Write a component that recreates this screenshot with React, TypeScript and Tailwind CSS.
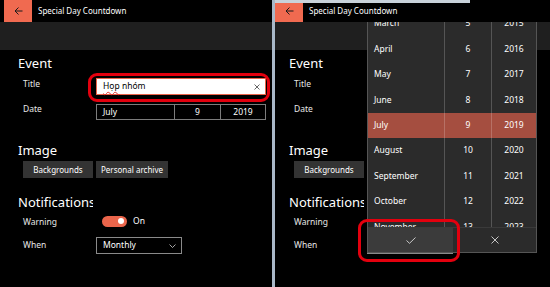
import React from "react";

const months = [
  ["March", "5", "2015"],
  ["April", "6", "2016"],
  ["May", "7", "2017"],
  ["June", "8", "2018"],
  ["July", "9", "2019"],
  ["August", "10", "2020"],
  ["September", "11", "2021"],
  ["October", "12", "2022"],
  ["November", "13", "2023"],
];

function Label({ children }: { children: React.ReactNode }) {
  return <div className="text-[8.5px] leading-[11px] text-[#e8e8e8]">{children}</div>;
}

function Screen({ picker = false }: { picker?: boolean }) {
  return (
    <div className="relative h-full bg-black text-white flex flex-col">
      {/* title bar */}
      <div className="h-[22px] flex items-center shrink-0">
        <div className="ml-[4px] w-[28px] h-full bg-[#f06a50] flex items-center justify-center">
          <svg width="9" height="8" viewBox="0 0 9 8" fill="none" stroke="#1b1b1b" strokeWidth="1">
            <path d="M8.5 4H1M4.5 0.5L1 4l3.5 3.5" />
          </svg>
        </div>
        <span className="ml-[6px] text-[8px] leading-none">Special Day Countdown</span>
      </div>
      <div className="h-[28px] bg-[#1f1f1f] shrink-0" />

      <div className="pl-[18px] flex flex-col">
        <div className="mt-[5px] text-[13px] leading-[16px]">Event</div>

        <div className="pl-[5px] grid grid-cols-[73px_1fr]">
          <div className="mt-[7px]"><Label>Title</Label></div>
          <div className="mt-[7px] w-[170px] h-[17px] bg-white border border-[#e8644b] flex items-center pl-[6px] pr-[5px]">
            <span className="flex-1 text-[8.5px] text-black leading-none">
              <span className="underline decoration-wavy decoration-[#e0302a] decoration-1 underline-offset-[2px]">Họp</span> nhóm
            </span>
            <svg width="6" height="6" viewBox="0 0 6 6" stroke="#555" strokeWidth="0.9">
              <path d="M0.5 0.5l5 5M5.5 0.5l-5 5" />
            </svg>
          </div>

          <div className="mt-[8px]"><Label>Date</Label></div>
          <div className="mt-[9px] w-[170px] h-[16px] border border-[#7c7c7c] grid grid-cols-[77px_46px_1fr] text-[8.5px] leading-none">
            <div className="flex items-center pl-[6px]">July</div>
            <div className="flex items-center justify-center border-l border-[#7c7c7c]">9</div>
            <div className="flex items-center justify-center border-l border-[#7c7c7c]">2019</div>
          </div>
        </div>

        <div className="mt-[22px] text-[13px] leading-[16px]">Image</div>
        <div className="pl-[5px] mt-[3px] flex gap-[3px]">
          <div className="w-[70px] h-[17px] bg-[#333333] flex items-center justify-center text-[8px] leading-none">Backgrounds</div>
          <div className="w-[72px] h-[17px] bg-[#333333] flex items-center justify-center text-[8px] leading-none">Personal archive</div>
        </div>

        <div className="mt-[16px] w-[75px] overflow-hidden whitespace-nowrap text-[13px] leading-[16px]">Notifications</div>

        <div className="pl-[5px] grid grid-cols-[73px_1fr]">
          <div className="mt-[3px] h-[16px] flex items-center"><Label>Warning</Label></div>
          <div className="mt-[3px] h-[16px] flex items-center">
            <div className="ml-[6px] w-[25px] h-[11px] rounded-full bg-[#ea654b] flex items-center justify-end pr-[3px]">
              <div className="w-[6px] h-[6px] rounded-full bg-white" />
            </div>
            <span className="ml-[6px] text-[8.5px] leading-none">On</span>
          </div>

          <div className="mt-[8px] h-[15px] flex items-center"><Label>When</Label></div>
          <div className="mt-[8px] w-[86px] h-[17px] border border-[#8a8a8a] flex items-center pl-[6px] pr-[5px]">
            <span className="flex-1 text-[8.5px] leading-none">Monthly</span>
            <svg width="7" height="4" viewBox="0 0 7 4" fill="none" stroke="#cfcfcf" strokeWidth="0.8">
              <path d="M0.5 0.5L3.5 3.5L6.5 0.5" />
            </svg>
          </div>
        </div>
      </div>

      {picker && <Flyout />}
    </div>
  );
}

function Flyout() {
  return (
    <div className="absolute top-[22px] left-[96px] w-[170px] h-[231px] bg-[#2b2b2b] border-x border-b border-[#555555] flex flex-col">
      <div className="h-[205px] overflow-hidden shrink-0">
        <div className="-mt-[11px]">
          {months.map(([m, d, y]) => {
            const sel = m === "July";
            return (
              <div
                key={m}
                className={`h-[25.4px] grid grid-cols-[76px_47px_1fr] text-[8.5px] leading-none ${sel ? "bg-[#a54e40]" : ""}`}
              >
                <div className="flex items-center pl-[6px]">{m}</div>
                <div className="flex items-center justify-center border-l border-white/20">{d}</div>
                <div className="flex items-center justify-center border-l border-white/20">{y}</div>
              </div>
            );
          })}
        </div>
      </div>
      <div className="flex-1 flex border-t border-[#3a3a3a]">
        <div className="w-[85px] bg-[#3b3b3b] flex items-center justify-center">
          <svg width="10" height="7" viewBox="0 0 10 7" fill="none" stroke="#d8d8d8" strokeWidth="0.9">
            <path d="M0.5 3.5L3.5 6.3L9.5 0.5" />
          </svg>
        </div>
        <div className="flex-1 flex items-center justify-center">
          <svg width="8" height="8" viewBox="0 0 8 8" fill="none" stroke="#d8d8d8" strokeWidth="0.9">
            <path d="M0.5 0.5l7 7M7.5 0.5l-7 7" />
          </svg>
        </div>
      </div>
    </div>
  );
}

export default function App() {
  return (
    <div className="flex w-[550px] h-[287px] bg-[#c9d2da] overflow-hidden font-['Noto_Sans',sans-serif]">
      <div className="relative w-[272px] h-full overflow-hidden shrink-0">
        <Screen />
        <div className="absolute left-[88px] top-[73px] w-[182px] h-[29px] border-[3px] border-[#e3000e] rounded-[9px]" />
      </div>
      <div className="w-[3px] h-full bg-[#a9b8c8] shrink-0" />
      <div className="relative w-[275px] h-full overflow-hidden shrink-0">
        <div className="-ml-[4px] w-[279px] h-full">
          <Screen picker />
        </div>
        <div className="absolute left-[83px] top-[219px] w-[102px] h-[43px] border-[3px] border-[#e3000e] rounded-[9px]" />
        <div className="absolute left-0 top-0 w-[195px] h-[3px] bg-[#c9d2da]" />
      </div>
    </div>
  );
}
